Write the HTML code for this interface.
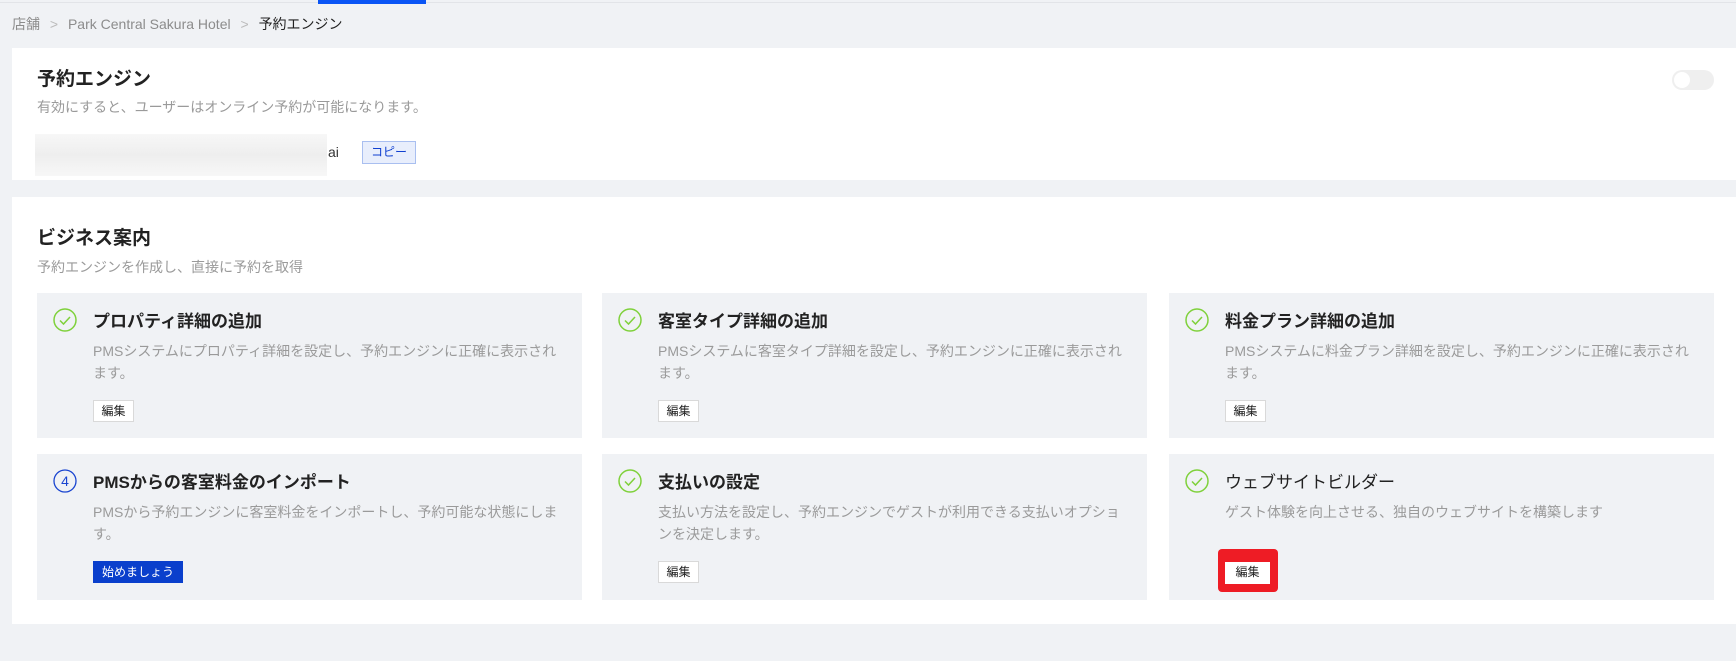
<!DOCTYPE html>
<html><head><meta charset="utf-8"><style>
*{margin:0;padding:0;box-sizing:border-box}
body{width:1736px;height:661px;background:#f0f2f5;font-family:"Liberation Sans","Noto Sans CJK JP",sans-serif;position:relative;overflow:hidden;color:#222}
.a{position:absolute;white-space:nowrap}
.card{position:absolute;background:#fff;left:12px;right:0}
.tile{position:absolute;background:#f0f2f5;width:545px;height:145px}
.tile .ic{position:absolute;left:16px;top:15px;width:24px;height:24px}
.tile .t{position:absolute;left:56px;top:14px;font-size:17px;font-weight:bold;color:#222}
.tile .d{position:absolute;left:56px;top:47px;width:470px;font-size:14px;line-height:22px;color:#9a9a9a;white-space:normal}
.btn{position:absolute;left:56px;top:107px;width:41px;height:22px;background:#fff;border:1px solid #d9d9d9;font-size:12px;line-height:20px;text-align:center;color:#222}
</style></head><body>
<div class="a" style="left:0;top:2px;width:1736px;height:1px;background:#e2e4e8"></div>
<div class="a" style="left:318px;top:0;width:108px;height:4px;background:#0a55f5"></div>
<div class="a" style="left:12px;top:14px;font-size:14px;color:#8c8c8c">店舗 <span style="color:#bbb;margin:0 6px">&gt;</span> Park Central Sakura Hotel <span style="color:#bbb;margin:0 6px">&gt;</span> <span style="color:#222">予約エンジン</span></div>

<div class="card" style="top:48px;height:132px">
<div class="a" style="left:25px;top:16px;font-size:19px;font-weight:bold">予約エンジン</div>
<div class="a" style="left:25px;top:49px;font-size:14px;color:#9a9a9a">有効にすると、ユーザーはオンライン予約が可能になります。</div>
<div class="a" style="left:23px;top:86px;width:292px;height:42px;background:linear-gradient(180deg,#f7f7f7,#eeeeee 50%,#f7f7f7)"></div>
<div class="a" style="left:316px;top:96px;font-size:14px;color:#333">ai</div>
<div class="a" style="left:350px;top:93px;width:54px;height:23px;background:#e8eefc;border:1px solid #a9bff0;font-size:12px;line-height:21px;text-align:center;color:#1040d0">コピー</div>
<div class="a" style="left:1660px;top:22px;width:42px;height:20px;border-radius:10px;background:#efefef"><div style="position:absolute;left:2px;top:2px;width:16px;height:16px;border-radius:50%;background:#fff"></div></div>
</div>

<div class="card" style="top:197px;height:427px">
<div class="a" style="left:25px;top:26px;font-size:19px;font-weight:bold">ビジネス案内</div>
<div class="a" style="left:25px;top:60px;font-size:14px;color:#9a9a9a">予約エンジンを作成し、直接に予約を取得</div>
</div>

<svg width="0" height="0" style="position:absolute"><defs><g id="ck"><circle cx="12" cy="12" r="11" fill="none" stroke="#7fd13b" stroke-width="1.5"/><path d="M7 12.5l3.5 3.5 6.5-7" fill="none" stroke="#7fd13b" stroke-width="1.5"/></g></defs></svg>

<div class="tile" style="left:37px;top:293px"><svg class="ic"><use href="#ck"/></svg><div class="t">プロパティ詳細の追加</div><div class="d">PMSシステムにプロパティ詳細を設定し、予約エンジンに正確に表示されます。</div><div class="btn">編集</div></div>
<div class="tile" style="left:602px;top:293px"><svg class="ic"><use href="#ck"/></svg><div class="t">客室タイプ詳細の追加</div><div class="d">PMSシステムに客室タイプ詳細を設定し、予約エンジンに正確に表示されます。</div><div class="btn">編集</div></div>
<div class="tile" style="left:1169px;top:293px"><svg class="ic"><use href="#ck"/></svg><div class="t">料金プラン詳細の追加</div><div class="d">PMSシステムに料金プラン詳細を設定し、予約エンジンに正確に表示されます。</div><div class="btn">編集</div></div>

<div class="tile" style="left:37px;top:454px;height:146px"><svg class="ic"><circle cx="12" cy="12" r="11" fill="none" stroke="#1a45d0" stroke-width="1.3"/><text x="12" y="17" text-anchor="middle" font-size="14" fill="#1a45d0" font-family="Liberation Sans">4</text></svg><div class="t">PMSからの客室料金のインポート</div><div class="d">PMSから予約エンジンに客室料金をインポートし、予約可能な状態にします。</div><div class="btn" style="width:90px;background:#0a3fcc;border-color:#0a3fcc;color:#fff">始めましょう</div></div>
<div class="tile" style="left:602px;top:454px;height:146px"><svg class="ic"><use href="#ck"/></svg><div class="t">支払いの設定</div><div class="d">支払い方法を設定し、予約エンジンでゲストが利用できる支払いオプションを決定します。</div><div class="btn">編集</div></div>
<div class="tile" style="left:1169px;top:454px;height:146px"><svg class="ic"><use href="#ck"/></svg><div class="t" style="font-weight:normal">ウェブサイトビルダー</div><div class="d">ゲスト体験を向上させる、独自のウェブサイトを構築します</div>
<div class="a" style="left:49px;top:95px;width:60px;height:43px;background:#ee1c25;border-radius:4px"></div><div class="btn" style="left:56px;top:108px;width:45px;height:22px;border:none">編集</div></div>
</body></html>
